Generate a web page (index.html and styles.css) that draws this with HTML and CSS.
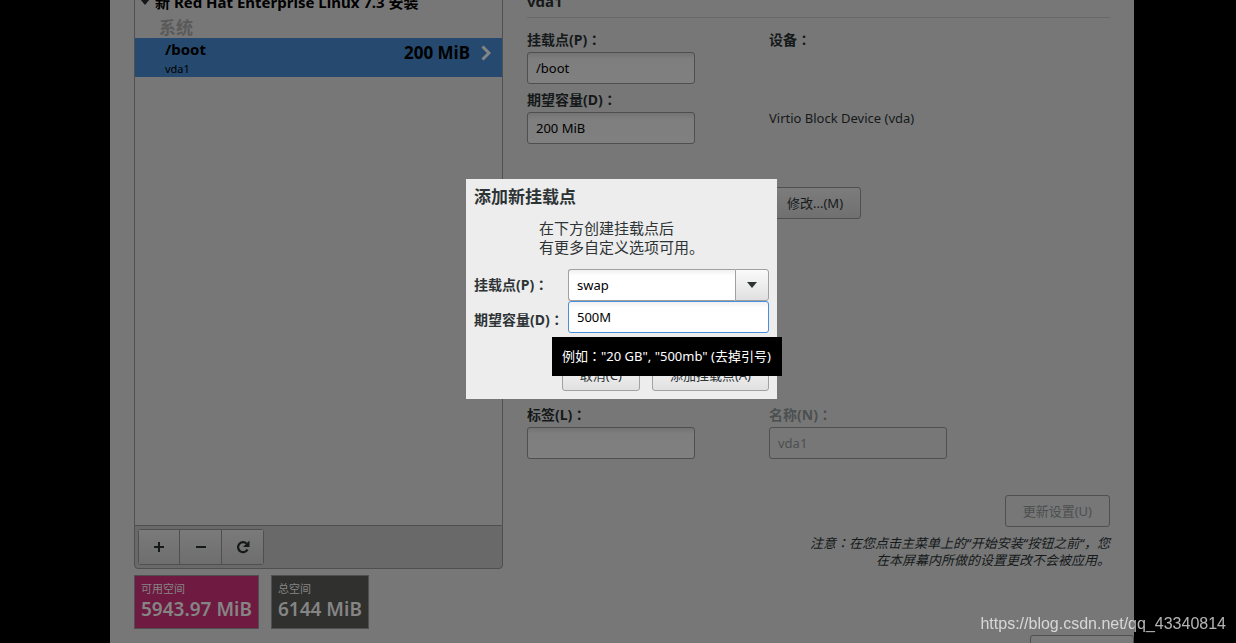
FILE: index.html
```html
<!DOCTYPE html>
<html lang="zh-CN">
<head>
<meta charset="utf-8">
<title>手动分区</title>
<link rel="stylesheet" href="styles.css">
</head>
<body>
<div class="screen">
  <main class="main">
    <section class="sidebar">
      <div class="list">
        <div class="list-heading">
          <svg class="expander" width="10" height="6" viewBox="0 0 10 6"><path d="M0 0h10L5 6z" fill="#15191a"/></svg>
          新 Red Hat Enterprise Linux 7.3 安装
        </div>
        <div class="list-group">系统</div>
        <div class="volume">
          <div class="volume-name"><b>/boot</b><small>vda1</small></div>
          <b class="volume-size">200 MiB</b>
          <svg class="volume-arrow" width="10" height="16" viewBox="0 0 10 16"><path d="M1.500 1.500L8 8l-6.500 6.500" fill="none" stroke="#858585" stroke-width="3"/></svg>
        </div>
      </div>
      <div class="toolbar">
        <div class="tool-group">
          <button class="tool" aria-label="添加"><svg width="12" height="12" viewBox="0 0 12 12"><path d="M1 6h10M6 1v10" stroke="#15191a" stroke-width="2"/></svg></button>
          <button class="tool" aria-label="删除"><svg width="12" height="12" viewBox="0 0 12 12"><path d="M1 6h10" stroke="#15191a" stroke-width="2"/></svg></button>
          <button class="tool" aria-label="刷新"><svg width="14" height="14" viewBox="0 0 14 14"><path d="M10.500 3.500A5 5 0 1 0 11.500 9.500" fill="none" stroke="#15191a" stroke-width="2.200"/><path d="M13.500 .5v6.500h-6.500z" fill="#15191a"/></svg></button>
        </div>
      </div>
      <div class="spaces">
        <div class="space space-free"><span>可用空间</span><b>5943.97 MiB</b></div>
        <div class="space space-total"><span>总空间</span><b>6144 MiB</b></div>
      </div>
    </section>
    <section class="details">
      <h1 class="details-title">vda1</h1>
      <div class="columns">
        <div class="fields">
          <label class="label" for="mount">挂载点(P)<span class="colon" lang="zh-TW">：</span></label>
          <input class="entry" id="mount" value="/boot">
          <label class="label" for="capacity">期望容量(D)<span class="colon" lang="zh-TW">：</span></label>
          <input class="entry" id="capacity" value="200 MiB">
        </div>
        <div class="device">
          <div class="label">设备<span class="colon" lang="zh-TW">：</span></div>
          <div class="device-name">Virtio Block Device (vda)</div>
          <button class="button modify">修改...(M)</button>
        </div>
      </div>
      <div class="columns">
        <div class="fields">
          <label class="label" for="tag">标签(L)<span class="colon" lang="zh-TW">：</span></label>
          <input class="entry" id="tag">
        </div>
        <div class="fields">
          <label class="label label-disabled" for="name">名称(N)<span class="colon" lang="zh-TW">：</span></label>
          <input class="entry" id="name" value="vda1" disabled>
        </div>
      </div>
      <button class="button update" disabled>更新设置(U)</button>
      <p class="note">注意<span class="colon" lang="zh-TW">：</span>在您点击主菜单上的“开始安装“按钮之前“，您<br>在本屏幕内所做的设置更改不会被应用。</p>
    </section>
  </main>
  <footer class="footer"><button class="button reset" aria-label="全部重设"></button></footer>
  <div class="dialog" role="dialog" aria-labelledby="dialog-title">
    <h2 class="dialog-title" id="dialog-title">添加新挂载点</h2>
    <p class="dialog-text">在下方创建挂载点后<br>有更多自定义选项可用。</p>
    <div class="form">
      <label for="new-mount">挂载点(P)<span class="colon" lang="zh-TW">：</span></label>
      <div class="combo">
        <input class="field" id="new-mount" value="swap">
        <button class="combo-arrow" aria-label="打开列表"><svg width="10" height="6" viewBox="0 0 10 6"><path d="M0 0h10L5 6z" fill="#2e3436"/></svg></button>
      </div>
      <label class="size-label" for="new-size">期望容量(D)<span class="colon" lang="zh-TW">：</span></label>
      <input class="field field-focused" id="new-size" value="500M">
    </div>
    <div class="actions">
      <button class="action">取消(C)</button>
      <button class="action">添加挂载点(A)</button>
    </div>
    <div class="tooltip" role="tooltip">例如<span class="colon" lang="zh-TW">：</span>"20 GB", "500mb" (去掉引号)</div>
  </div>
</div>
<div class="watermark">https://blog.csdn.net/qq_43340814</div>
</body>
</html>
```
FILE: styles.css
```css
* {
  box-sizing: border-box;
}

body {
  margin: 0;
  background: #000;
  color: #15191a;
  font: 13px/18px "Noto Sans", "Noto Sans CJK SC", sans-serif;
  overflow: hidden;
}

button,
input {
  font: inherit;
  margin: 0;
}

.colon {
  font-family: "Noto Sans CJK TC", sans-serif;
  line-height: 1;
}

.screen {
  position: relative;
  display: flex;
  flex-direction: column;
  height: 100vh;
  margin: 0 102px 0 110px;
  background: #777;
  overflow: hidden;
}

.main {
  display: flex;
  flex: 1;
  gap: 24px;
  min-height: 0;
  padding: 0 24px 6px;
}

.sidebar {
  display: flex;
  flex-direction: column;
  width: 369px;
}

.list {
  flex: 1;
  border: solid #4f4f4f;
  border-width: 0 1px;
  color: #000;
}

.list-heading {
  display: flex;
  align-items: center;
  gap: 5px;
  height: 24px;
  margin-top: -10px;
  padding-left: 5px;
  font-size: 15px;
  font-weight: 700;
}

.list-group {
  height: 24px;
  padding-left: 24px;
  color: #5a5a5a;
  font-size: 17px;
  font-weight: 700;
  line-height: 28px;
}

.volume {
  display: flex;
  align-items: flex-start;
  height: 39px;
  padding: 0 11px 0 30px;
  background: #264a6f;
}

.volume-name {
  display: flex;
  flex: 1;
  flex-direction: column;
}

.volume-name b {
  font-size: 15px;
  line-height: 23px;
}

.volume-name small {
  font-size: 11px;
  line-height: 16px;
}

.volume-size {
  margin-right: 11px;
  font-size: 17px;
  line-height: 30px;
}

.volume-arrow {
  margin-top: 7px;
}

.toolbar {
  height: 44px;
  padding: 3px;
  border: 1px solid #4f4f4f;
  border-radius: 0 0 4px 4px;
  background: #696969;
}

.tool-group {
  display: inline-flex;
  border: 1px solid #4f4f4f;
  border-radius: 3px;
}

.tool {
  display: grid;
  place-items: center;
  width: 42px;
  height: 34px;
  padding: 0;
  border: 0;
  border-right: 1px solid #4f4f4f;
  background: linear-gradient(#7a7a7a, #6e6e6e);
}

.tool:first-child,
.tool:last-child {
  width: 41px;
}

.tool:last-child {
  border-right: 0;
}

.spaces {
  display: flex;
  gap: 12px;
  margin-top: 6px;
}

.space {
  display: flex;
  flex-direction: column;
  height: 54px;
  padding: 5px 6px;
  border: 1px solid #4f4f4f;
  color: #858585;
}

.space span {
  font-size: 11px;
  line-height: 16px;
}

.space b {
  font-size: 19px;
  font-weight: 600;
  line-height: 25px;
}

.space-free {
  background: #6f1a40;
}

.space-total {
  background: #30302e;
}

.details {
  display: flex;
  flex: 1;
  flex-direction: column;
}

.details-title {
  height: 28px;
  margin: -10px 0 14px;
  border-bottom: 1px solid #686868;
  font-size: 15px;
  line-height: 22px;
}

.columns {
  display: grid;
  grid-template-columns: 168px 178px;
  gap: 74px;
}

.columns + .columns {
  margin-top: 188px;
}

.fields,
.device {
  display: flex;
  flex-direction: column;
  align-items: stretch;
}

.label {
  height: 20px;
  font-size: 14px;
  font-weight: 700;
  line-height: 16px;
}

.label-disabled {
  color: #4c4f50;
}

.entry {
  width: 100%;
  height: 32px;
  padding: 0 8px;
  border: 1px solid #4f4f4f;
  border-radius: 3px;
  background: linear-gradient(#737373, #7e7e7e 6px, #808080);
  color: #000;
}

.entry:not(:last-child) {
  margin-bottom: 8px;
}

.entry:disabled {
  background: #777;
  color: #4c4f50;
}

.device .label {
  line-height: 12px;
}

.device-name {
  margin-top: 57px;
}

.button {
  height: 32px;
  padding: 0 16px;
  border: 1px solid #4f4f4f;
  border-radius: 3px;
  background: linear-gradient(#7c7c7c, #707070);
  color: #15191a;
}

.button:disabled {
  background: #777;
  color: #4c4f50;
}

.modify {
  align-self: flex-start;
  margin-top: 60px;
  padding: 0 17px;
}

.update {
  align-self: flex-end;
  margin-top: 36px;
  padding: 0 17px;
}

.note {
  margin: 8px 0 0;
  font-style: italic;
  line-height: 17px;
  text-align: right;
}

.footer {
  display: flex;
  justify-content: flex-end;
  align-items: flex-start;
  height: 8px;
}

.reset {
  flex-shrink: 0;
  width: 104px;
}

.dialog {
  position: absolute;
  top: 179px;
  left: calc(50% - 156px);
  width: 311px;
  padding: 8px;
  background: #ededed;
  color: #2e3436;
}

.dialog-title {
  margin: 0;
  font-size: 17px;
  line-height: 20px;
}

.dialog-text {
  width: 165px;
  margin: 12px auto;
  font-size: 15px;
  line-height: 19px;
}

.form {
  display: grid;
  grid-template-columns: 94px 1fr;
  align-items: center;
  font-size: 14px;
  font-weight: 700;
  white-space: nowrap;
}

.size-label {
  padding-top: 6px;
}

.combo {
  display: flex;
}

.field {
  flex: 1;
  width: 100%;
  min-width: 0;
  height: 32px;
  padding: 0 8px;
  border: 1px solid #a1a1a1;
  border-radius: 3px;
  background: linear-gradient(#f0f0f0, #fff 6px);
  color: #000;
  font-size: 13px;
  font-weight: 400;
  outline: 0;
}

.combo .field {
  border-right: 0;
  border-radius: 3px 0 0 3px;
}

.field-focused {
  border-color: #4a90d9;
}

.combo-arrow {
  display: grid;
  place-items: center;
  width: 34px;
  padding: 0;
  border: 1px solid #a1a1a1;
  border-radius: 0 3px 3px 0;
  background: linear-gradient(#fafafa, #e0e0e0);
}

.actions {
  display: flex;
  justify-content: flex-end;
  gap: 12px;
  margin-top: 26px;
}

.action {
  height: 32px;
  padding: 0 17px;
  border: 1px solid #a1a1a1;
  border-radius: 3px;
  background: linear-gradient(#fafafa, #e0e0e0);
  color: #2e3436;
}

.tooltip {
  position: absolute;
  top: 158px;
  left: 86px;
  padding: 10px 11px 10px 10px;
  background: #000;
  color: #fff;
  line-height: 19px;
  white-space: nowrap;
}

.watermark {
  position: fixed;
  right: 10px;
  bottom: 10px;
  color: rgba(255, 255, 255, 0.7);
  font: 16px/18px "Liberation Sans", Arial, sans-serif;
}
```
